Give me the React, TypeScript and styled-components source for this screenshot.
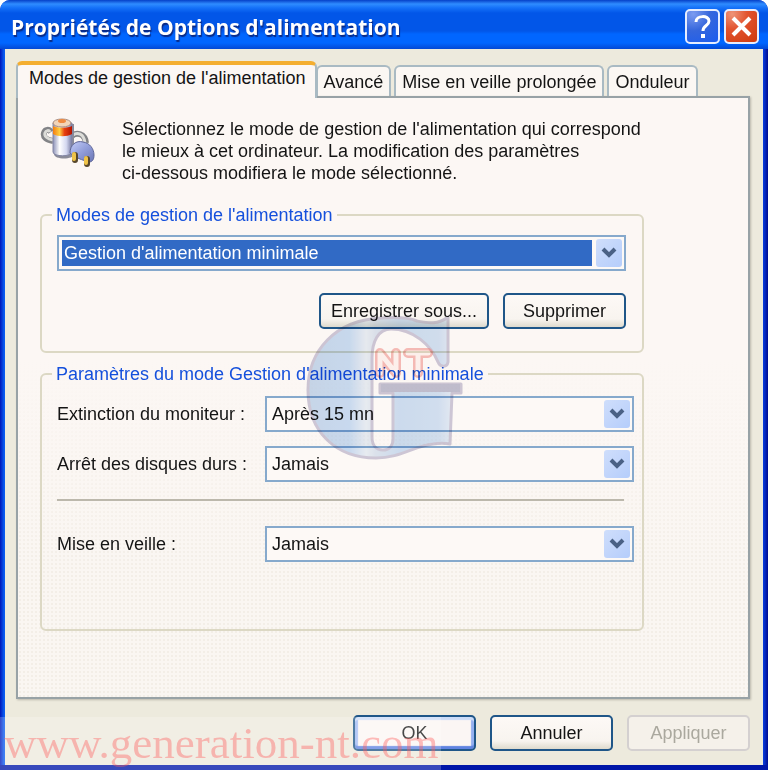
import React, { useState } from 'react';
import styled, { createGlobalStyle, css } from 'styled-components';

const GlobalStyle = createGlobalStyle`
  * {
    box-sizing: border-box;
  }

  body {
    margin: 0;
    background: #ffffff;
    color: #141414;
    font-family: 'Liberation Sans', Arial, sans-serif;
    font-size: 18px;
    line-height: 22px;
  }
`;

const Window = styled.main`
  position: relative;
  display: flex;
  flex-direction: column;
  min-height: 100vh;
  padding: 0 5px 5px;
  overflow: hidden;
  border-radius: 10px 10px 0 0;
  background: linear-gradient(90deg, #0015b8 0, #0a5bf0 4px, #0a3fe0 50%, #0a3fe0 calc(100% - 5px), #000c90 100%);
  box-shadow: inset 0 -5px 0 #0016a8;
`;

const TitleBar = styled.header`
  display: flex;
  align-items: center;
  gap: 4px;
  height: 49px;
  margin: 0 -5px;
  padding: 4px 9px 0 11px;
  background: linear-gradient(
    180deg,
    #0540c8 0,
    #2f8cff 4px,
    #1470f8 8px,
    #0256e8 13px,
    #0256e8 31px,
    #0166ff 34px,
    #0166ff 43px,
    #0348d4 49px
  );
`;

const Title = styled.h1`
  flex: 1;
  margin: 0;
  color: #ffffff;
  font-family: 'Open Sans', 'Noto Sans', sans-serif;
  font-size: 21px;
  font-weight: 700;
  line-height: 28px;
  text-shadow: 1px 2px 1px #0a2a86;
  white-space: nowrap;
`;

const CaptionButton = styled.button<{ $danger?: boolean }>`
  display: flex;
  align-items: center;
  justify-content: center;
  width: 35px;
  height: 35px;
  padding: 0;
  border: 2px solid #e6edff;
  border-radius: 5px;
  background: ${({ $danger }) =>
    $danger
      ? 'radial-gradient(circle at 20% 10%, #ee9478 0, #e2532f 40%, #cf3a0e 100%)'
      : 'radial-gradient(circle at 20% 10%, #7c9cf0 0, #3566dc 45%, #1a5cf0 100%)'};
`;

const Client = styled.div`
  display: flex;
  flex: 1;
  flex-direction: column;
  padding: 12px 13px 14px 11px;
  background: #edeadd;
`;

const TabList = styled.div`
  display: flex;
  align-items: flex-end;
  gap: 3px;
`;

const Tab = styled.button<{ $active: boolean }>`
  height: 31px;
  padding: 0 6px;
  border: 2px solid #a9bac3;
  border-bottom: 0;
  border-radius: 6px 6px 0 0;
  background: #fbf7f3;
  color: inherit;
  font: inherit;
  white-space: nowrap;

  ${({ $active }) =>
    $active &&
    css`
      z-index: 1;
      height: 37px;
      margin: 0 -4px -2px 0;
      padding: 0 9px 8px 11px;
      border-top: 4px solid #f4ae30;
      background: #fcf7f4;
    `}
`;

const Panel = styled.section`
  flex: 1;
  padding: 20px 16px;
  border: 2px solid #98a2a6;
  background:
    linear-gradient(180deg, #fcf7f4 260px, rgba(252, 247, 244, 0) 480px),
    radial-gradient(circle, #f3eee7 1px, rgba(252, 247, 244, 0) 1px) 0 0 / 4px 4px,
    #faf6f2;
  box-shadow: 1px 1px 2px #bbb8ac;
`;

const Content = styled.div`
  max-width: 604px;
  margin-left: 6px;
`;

const Intro = styled.div`
  display: flex;
  gap: 24px;
  margin-bottom: 20px;

  p {
    margin: 0;
  }
`;

const Group = styled.fieldset<{ $tall?: boolean }>`
  min-width: 0;
  margin: 0 0 10px;
  padding: ${({ $tall }) => ($tall ? '11px 8px 53px 15px' : '9px 16px 22px 15px')};
  border: 2px solid #dcd8c4;
  border-radius: 6px;

  legend {
    margin-left: -5px;
    padding: 0 4px;
    color: #1550dc;
  }
`;

const SelectFrame = styled.div`
  display: grid;
  grid-template-columns: 1fr 34px;
  align-items: center;
  height: 36px;
  border: 2px solid #86a9cc;
  background: #fdf9f6;
`;

const SelectBox = styled.select<{ $highlighted?: boolean }>`
  grid-area: 1 / 1 / 2 / 3;
  width: 100%;
  height: 32px;
  padding: 0 34px 0 5px;
  border: 3px solid #fdf9f6;
  border-left-width: ${({ $highlighted }) => ($highlighted ? 3 : 0)}px;
  border-right-width: 0;
  outline: 0;
  appearance: none;
  background: #fdf9f6;
  color: inherit;
  font: inherit;

  ${({ $highlighted }) =>
    $highlighted &&
    css`
      padding-left: 2px;
      background: linear-gradient(270deg, #fdf9f6 32px, #316ac5 32px);
      color: #ffffff;

      option {
        color: #141414;
      }
    `}
`;

const Arrow = styled.span`
  grid-area: 1 / 2;
  display: flex;
  align-items: center;
  justify-content: center;
  justify-self: end;
  width: 26px;
  height: 28px;
  margin-right: 2px;
  border-radius: 3px;
  background: linear-gradient(135deg, #cfdefb, #b5cdfb);
  pointer-events: none;
`;

const ButtonRow = styled.div<{ $top: number }>`
  display: flex;
  justify-content: flex-end;
  gap: 14px;
  margin-top: ${({ $top }) => $top}px;
`;

const Button = styled.button<{ $wide?: boolean; $primary?: boolean }>`
  width: ${({ $wide }) => ($wide ? 170 : 123)}px;
  height: 36px;
  padding: 0;
  border: 2px solid #1f5688;
  border-radius: 5px;
  background: linear-gradient(180deg, #fdf9f6 0, #f8f4ef 75%, #dedacd 100%);
  color: inherit;
  font: inherit;
  white-space: nowrap;

  ${({ $primary }) =>
    $primary &&
    css`
      background: #fbf6f4;
      box-shadow:
        inset 0 3px 1px #ccdcf8,
        inset 0 -3px 1px #5f83e0,
        inset 3px 0 1px #a0baf4,
        inset -3px 0 1px #94b0f0;
    `}

  &:disabled {
    border-color: #d4d0d0;
    background: #f5f1ea;
    color: #aaa89e;
  }
`;

const Field = styled.div`
  display: grid;
  grid-template-columns: 208px 1fr;
  align-items: center;
  margin-bottom: 14px;
`;

const Separator = styled.hr`
  height: 2px;
  margin: 17px 10px 25px 0;
  border: 0;
  background: #bcb8ac;
`;

const LogoMark = styled.svg`
  position: absolute;
  top: 314px;
  left: 304px;
  mix-blend-mode: multiply;
  pointer-events: none;
`;

const SiteMark = styled.div`
  position: absolute;
  bottom: 0;
  left: 0;
  z-index: 2;
  height: 53px;
  padding: 0 3px 0 4px;
  background: rgba(255, 255, 255, 0.22);
  color: rgba(255, 92, 92, 0.4);
  font-family: 'Liberation Serif', 'Times New Roman', serif;
  font-size: 45px;
  line-height: 53px;
  pointer-events: none;
`;

const PowerIcon = () => (
  <svg width="58" height="52" viewBox="0 0 58 52" aria-hidden="true">
    <defs>
      <linearGradient id="cell" x1="0" x2="1">
        <stop offset="0" stopColor="#8c92b8" />
        <stop offset="0.35" stopColor="#ffffff" />
        <stop offset="0.7" stopColor="#d4d8f0" />
        <stop offset="1" stopColor="#7478a0" />
      </linearGradient>
      <linearGradient id="band" x1="0" x2="1">
        <stop offset="0" stopColor="#f47c10" />
        <stop offset="0.35" stopColor="#ffd040" />
        <stop offset="0.6" stopColor="#e84010" />
        <stop offset="1" stopColor="#b41400" />
      </linearGradient>
      <linearGradient id="plug" x1="0" y1="0" x2="1" y2="1">
        <stop offset="0" stopColor="#c4cdf8" />
        <stop offset="0.5" stopColor="#929eda" />
        <stop offset="1" stopColor="#6a75b4" />
      </linearGradient>
    </defs>
    <path d="M13 23C6 22 3 19 4 15s5-4 7-1M32 18c4-4 13-3 14 7" fill="none" stroke="#828386" strokeWidth="6" />
    <path d="M13 22C7 21 4 18 5 15s4-3 5-1M33 17c4-3 11-2 12 8" fill="none" stroke="#dcdcd8" strokeWidth="3" />
    <path d="M14 6v30c0 6 20 6 20 0V6z" fill="#8a8b98" />
    <path d="M13 5v29c0 5 19 5 19 0V5z" fill="url(#cell)" stroke="#8386a4" />
    <path d="M13 8c4 2 15 2 19 0v8c-5 3-14 3-19 0z" fill="url(#band)" />
    <ellipse cx="22" cy="5" rx="9" ry="4" fill="#f2d5b8" stroke="#a78c80" />
    <ellipse cx="22" cy="3" rx="4" ry="2" fill="#ef8a40" />
    <path
      d="M30 35c0-8 6-13 13-11 7 1 11 7 11 13 0 5-2 7-5 7-7-2-13-4-19-9z"
      fill="url(#plug)"
      stroke="#5f6798"
    />
    <path d="M35 37v5M47 41v5" stroke="#57472c" strokeWidth="6" strokeLinecap="round" />
    <path d="M34 36v5M46 40v5" stroke="#efc348" strokeWidth="4" strokeLinecap="round" />
  </svg>
);

const ChevronIcon = () => (
  <svg width="18" height="12" viewBox="0 0 18 12" aria-hidden="true">
    <path d="M3 2l6 6 6-6" fill="none" stroke="#4a6185" strokeWidth="4" />
  </svg>
);

const HelpIcon = () => (
  <svg width="21" height="25" viewBox="0 0 21 25" aria-hidden="true">
    <path d="M4 8c0-7 13-7 13-1 0 5-6 4-6 10" fill="none" stroke="#ffffff" strokeWidth="3" />
    <path d="M9 20h4v4H9z" fill="#ffffff" />
  </svg>
);

const CloseIcon = () => (
  <svg width="21" height="21" viewBox="0 0 21 21" aria-hidden="true">
    <path d="M2 2l17 17M19 2L2 19" stroke="#ffffff" strokeWidth="4" />
  </svg>
);

const GenerationLogo = () => (
  <LogoMark width="162" height="150" viewBox="0 0 162 150" aria-hidden="true">
    <defs>
      <linearGradient id="steel" x1="0" x2="1">
        <stop offset="0" stopColor="#86afe0" />
        <stop offset="0.27" stopColor="#8ab8ee" />
        <stop offset="0.38" stopColor="#cfe0f2" />
        <stop offset="0.44" stopColor="#b4cbe6" />
        <stop offset="0.6" stopColor="#92bbea" />
        <stop offset="0.85" stopColor="#9dc2ee" />
        <stop offset="0.95" stopColor="#c8dcf4" />
      </linearGradient>
    </defs>
    <g opacity="0.45" strokeLinejoin="round">
      <path
        d="M77 4C32 6 4 36 4 76c0 42 28 68 68 68 24 0 38-12 57-14 6-1 12-1 17 0l2-51h9v-9H76v9h13v46c0 7-4 11-10 11-7 0-11-5-11-13V44c0-16 6-29 19-29 22 0 40 16 47 33 2 5 9 6 10 0V3c-10 8-20 6-31 4C106 4 93 3 77 4z"
        fill="url(#steel)"
        stroke="#958db4"
        strokeWidth="3"
      />
      <path d="M77 74h79" stroke="#7879a2" strokeWidth="8" />
    </g>
    <g opacity="0.5" fill="none" strokeLinejoin="round" strokeLinecap="round">
      <path d="M76 59V39l16 20V39M104 39h20M114 39v20" stroke="#f0807a" strokeWidth="10" />
      <path d="M76 59V39l16 20V39M104 39h20M114 39v20" stroke="#fff0ed" strokeWidth="5" />
    </g>
  </LogoMark>
);

const tabs = ["Modes de gestion de l'alimentation", 'Avancé', 'Mise en veille prolongée', 'Onduleur'];

interface DropDownProps {
  id: string;
  options: string[];
  label?: string;
  highlighted?: boolean;
}

const DropDown: React.FC<DropDownProps> = ({ id, options, label, highlighted }) => {
  const [value, setValue] = useState(options[0]);

  return (
    <SelectFrame>
      <SelectBox
        id={id}
        aria-label={label}
        value={value}
        $highlighted={highlighted}
        onChange={(e) => setValue(e.target.value)}
      >
        {options.map(option => (
          <option key={option}>{option}</option>
        ))}
      </SelectBox>
      <Arrow>
        <ChevronIcon />
      </Arrow>
    </SelectFrame>
  );
};

const App: React.FC = () => {
  const [activeTab, setActiveTab] = useState(0);

  return (
    <>
      <GlobalStyle />
      <Window>
        <TitleBar>
          <Title>Propriétés de Options d'alimentation</Title>
          <CaptionButton aria-label="Aide">
            <HelpIcon />
          </CaptionButton>
          <CaptionButton $danger aria-label="Fermer">
            <CloseIcon />
          </CaptionButton>
        </TitleBar>
        <Client>
          <TabList role="tablist">
            {tabs.map((tab, index) => (
              <Tab
                key={tab}
                role="tab"
                aria-selected={index === activeTab}
                $active={index === activeTab}
                onClick={() => setActiveTab(index)}
              >
                {tab}
              </Tab>
            ))}
          </TabList>
          <Panel role="tabpanel">
            <Content>
              <Intro>
                <PowerIcon />
                <p>
                  Sélectionnez le mode de gestion de l'alimentation qui correspond
                  <br />
                  le mieux à cet ordinateur. La modification des paramètres
                  <br />
                  ci-dessous modifiera le mode sélectionné.
                </p>
              </Intro>
              <Group>
                <legend>Modes de gestion de l'alimentation</legend>
                <DropDown
                  id="scheme"
                  label="Modes de gestion de l'alimentation"
                  options={["Gestion d'alimentation minimale"]}
                  highlighted
                />
                <ButtonRow $top={22}>
                  <Button $wide>Enregistrer sous...</Button>
                  <Button>Supprimer</Button>
                </ButtonRow>
              </Group>
              <Group $tall>
                <legend>Paramètres du mode Gestion d'alimentation minimale</legend>
                <Field>
                  <label htmlFor="monitor">Extinction du moniteur :</label>
                  <DropDown id="monitor" options={['Après 15 mn', 'Jamais']} />
                </Field>
                <Field>
                  <label htmlFor="disks">Arrêt des disques durs :</label>
                  <DropDown id="disks" options={['Jamais', 'Après 15 mn']} />
                </Field>
                <Separator />
                <Field>
                  <label htmlFor="standby">Mise en veille :</label>
                  <DropDown id="standby" options={['Jamais', 'Après 15 mn']} />
                </Field>
              </Group>
            </Content>
          </Panel>
          <ButtonRow $top={16}>
            <Button $primary>OK</Button>
            <Button>Annuler</Button>
            <Button disabled>Appliquer</Button>
          </ButtonRow>
        </Client>
        <GenerationLogo />
        <SiteMark>www.generation-nt.com</SiteMark>
      </Window>
    </>
  );
};

export default App;
